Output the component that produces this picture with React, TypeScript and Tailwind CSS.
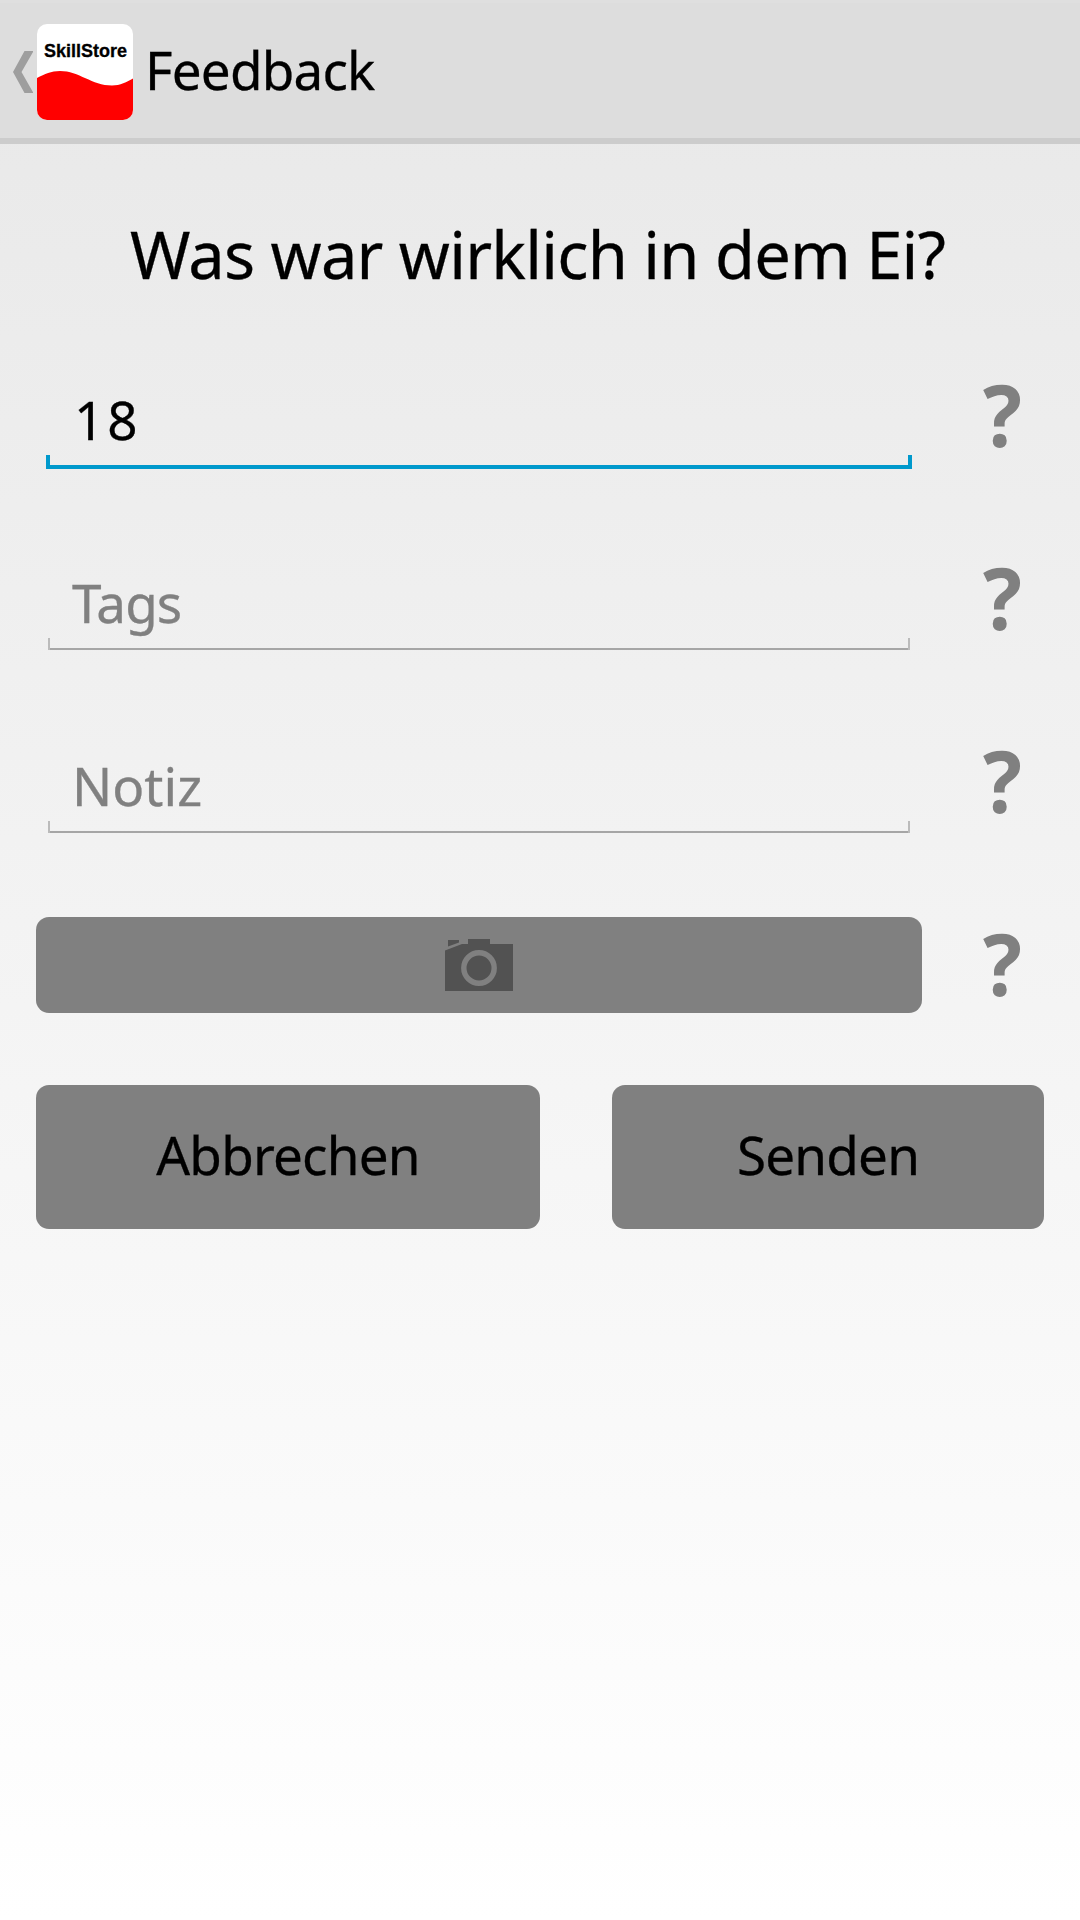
import type { ReactNode } from "react";

function BackChevron() {
  return (
    <svg className="ml-[13px] h-[42px] w-5 shrink-0" viewBox="0 0 20 42">
      <path d="M11.5 0H20.5L8.5 21L20.5 42H11.5L0 21Z" fill="#9e9e9e" />
    </svg>
  );
}

function AppIcon() {
  return (
    <div className="relative ml-1 h-24 w-24 shrink-0 overflow-hidden rounded-[10px] bg-white">
      <svg className="absolute inset-0 h-24 w-24" viewBox="0 0 96 96">
        <path
          d="M0 54C8 50 14 47 23 47C42 47 55 61.5 75 61.5C83 61.5 90 58 96 54.5V96H0Z"
          fill="#ff0000"
        />
      </svg>
      <div className="relative pt-[17px] pl-px text-center font-['Liberation_Sans',sans-serif] text-[18px] leading-5 font-bold text-black">
        SkillStore
      </div>
    </div>
  );
}

function CameraIcon() {
  return (
    <svg className="h-[52px] w-[68px]" viewBox="0 0 68 52">
      <path d="M0 11.5L17 5H23V0H45V5H68V52H0Z" fill="#525252" />
      <path d="M3 1H14V3.5L3 7.5Z" fill="#525252" />
      <circle cx="34" cy="29" r="15.2" fill="none" stroke="#808080" strokeWidth="5.4" />
    </svg>
  );
}

function Row({ children }: { children: ReactNode }) {
  return (
    <div className="flex h-[104px]">
      <div className="w-[886px] shrink-0">{children}</div>
      <div className="flex w-[158px] shrink-0 items-center justify-center pb-[7px] pl-[3px] font-['Open_Sans',sans-serif] text-[86px] leading-none font-bold text-[#808080]">
        <span className="scale-x-95">?</span>
      </div>
    </div>
  );
}

function Underline({ active = false }: { active?: boolean }) {
  return active ? (
    <div className="mx-[10px] h-[14px] border-x-4 border-b-4 border-[#0099cc]" />
  ) : (
    <div className="mx-3 mb-0.5 flex h-3">
      <div className="w-0.5 bg-[#bbbbbb]" />
      <div className="flex-1 border-b-2 border-[#a6a6a6]" />
      <div className="w-0.5 bg-[#bbbbbb]" />
    </div>
  );
}

const button =
  "flex h-36 items-center justify-center rounded-[13px] bg-[#808080] pb-[5px] tracking-[-0.8px]";

export default function App() {
  return (
    <div className="flex h-[1920px] w-[1080px] flex-col overflow-hidden bg-linear-to-b from-[#e8e8e8] to-white font-['Noto_Sans',sans-serif] text-[53px] text-black">
      <header className="flex h-36 items-center border-t-3 border-b-6 border-t-[#dfdfdf] border-b-[#cccccc] bg-[#dddddd] pt-[3px] [-webkit-text-stroke:0.3px]">
        <BackChevron />
        <AppIcon />
        <h1 className="ml-3 pb-[5px] leading-[60px] tracking-[-0.8px]">Feedback</h1>
      </header>

      <main className="pl-9">
        <h2 className="mt-[60px] mr-[41px] text-center text-[65px] leading-[100px] tracking-[-0.75px] [-webkit-text-stroke:0.3px]">
          Was war wirklich in dem Ei?
        </h2>

        <div className="mt-[61px] flex flex-col gap-[79px]">
          <Row>
            <div className="h-[90px] pl-[38px] leading-[110px] tracking-[3px] [-webkit-text-stroke:0.3px]">
              18
            </div>
            <Underline active />
          </Row>
          <Row>
            <div className="h-[90px] pl-9 leading-[110px] tracking-[-0.9px] text-[#808080] [-webkit-text-stroke:0.3px]">
              Tags
            </div>
            <Underline />
          </Row>
          <Row>
            <div className="h-[90px] pl-9 leading-[110px] text-[#808080] [-webkit-text-stroke:0.3px]">
              Notiz
            </div>
            <Underline />
          </Row>
          <Row>
            <div className="mt-[3px] flex h-24 items-center justify-center rounded-[13px] bg-[#808080]">
              <CameraIcon />
            </div>
          </Row>
        </div>

        <div className="mt-[67px] flex gap-[72px] [-webkit-text-stroke:0.3px]">
          <div className={`${button} w-[504px]`}>Abbrechen</div>
          <div className={`${button} w-[432px]`}>Senden</div>
        </div>
      </main>
    </div>
  );
}
